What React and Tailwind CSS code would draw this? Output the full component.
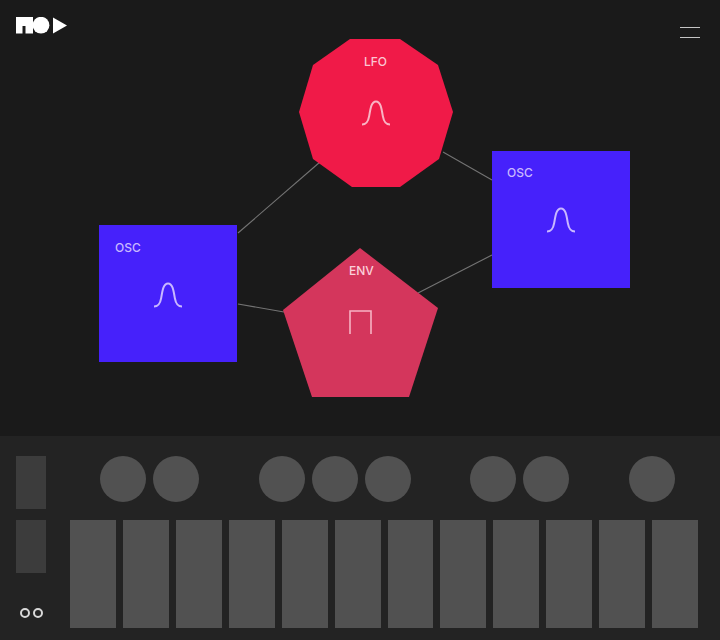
const FONT = "font-['Inter','Liberation_Sans',sans-serif]";

const Bell = ({ className, color }) => (
  <svg className={className} width="30" height="26" viewBox="0 0 30 26" fill="none">
    <path
      d="M1 24.5C5 24.5 7 22.5 8.2 16C9.5 8 10.5 1.5 15 1.5C19.5 1.5 20.5 8 21.8 16C23 22.5 25 24.5 29 24.5"
      stroke={color}
      strokeWidth="2"
    />
  </svg>
);

const Pulse = ({ className, color }) => (
  <svg className={className} width="24" height="24" viewBox="0 0 24 24" fill="none">
    <path d="M1 24V1H22V24" stroke={color} strokeWidth="1.6" />
  </svg>
);

const Knob = ({ className = "" }) => (
  <div className={`w-[46px] h-[46px] rounded-full bg-[#515151] shrink-0 ${className}`} />
);

const KEYS = Array.from({ length: 12 }, (_, i) => i);

export default function App() {
  return (
    <div className={`w-[720px] h-[640px] flex flex-col bg-[#1a1a1a] overflow-hidden ${FONT}`}>
      {/* patch canvas */}
      <div className="relative h-[436px] shrink-0">
        <svg className="absolute left-[16px] top-[17px]" width="52" height="18" viewBox="0 0 52 18" fill="white">
          <path d="M0 0H17V16.5H9.5V9H6.5V16.5H0Z" />
          <circle cx="25" cy="8.2" r="8.4" />
          <path d="M37 0.5L51 8.5L37 16.5Z" />
        </svg>

        <div className="absolute left-[680px] top-[27px] w-[20px] flex flex-col gap-[9px]">
          <div className="h-px bg-[#c4c4c4]" />
          <div className="h-px bg-[#c4c4c4]" />
        </div>

        <svg className="absolute inset-0" width="720" height="436" fill="none" stroke="#747474" strokeWidth="1.1">
          <path d="M238 233L320 162" />
          <path d="M443 152L492 180" />
          <path d="M238 304L284 312" />
          <path d="M418 293L492 255" />
        </svg>

        {/* LFO */}
        <div className="absolute left-[299px] top-[39px] w-[154px] h-[148px] bg-[#f01a48] [clip-path:polygon(51px_0,101px_0,139px_26px,154px_73px,140px_120px,101px_148px,53px_148px,14px_120px,0_73px,14px_26px)]">
          <span className="absolute left-[65px] top-[15px] text-[12px] leading-4 font-medium text-[#fbc6d2]">LFO</span>
          <Bell className="absolute left-[62px] top-[61px]" color="#f9b4c4" />
        </div>

        {/* OSC left */}
        <div className="absolute left-[99px] top-[225px] w-[138px] h-[137px] bg-[#4621fb]">
          <span className="absolute left-[16px] top-[15px] text-[12px] leading-4 font-medium text-[#c9b8ff]">OSC</span>
          <Bell className="absolute left-[54px] top-[57px]" color="#c9b8ff" />
        </div>

        {/* OSC right */}
        <div className="absolute left-[492px] top-[151px] w-[138px] h-[137px] bg-[#4621fb]">
          <span className="absolute left-[15px] top-[14px] text-[12px] leading-4 font-medium text-[#c9b8ff]">OSC</span>
          <Bell className="absolute left-[54px] top-[56px]" color="#c9b8ff" />
        </div>

        {/* ENV */}
        <div className="absolute left-[283px] top-[248px] w-[155px] h-[149px] bg-[#d4365c] [clip-path:polygon(77px_0,155px_60px,126px_149px,29px_149px,0_62px)]">
          <span className="absolute left-[66px] top-[15px] text-[12px] leading-4 font-medium text-[#fbd0da]">ENV</span>
          <Pulse className="absolute left-[66px] top-[62px]" color="#f7b3c3" />
        </div>
      </div>

      {/* sequencer panel */}
      <div className="flex-1 flex bg-[#232323] pl-[16px] pt-[20px]">
        <div className="w-[30px] flex flex-col shrink-0">
          <div className="h-[53px] bg-[#3c3c3c]" />
          <div className="h-[53px] mt-[11px] bg-[#3c3c3c]" />
          <div className="flex gap-[3px] mt-[35px] ml-[4px]">
            <div className="w-[10px] h-[10px] rounded-full border-2 border-[#d8d8d8]" />
            <div className="w-[10px] h-[10px] rounded-full border-2 border-[#d8d8d8]" />
          </div>
        </div>
        <div className="ml-[24px] w-[628px] flex flex-col">
          <div className="flex gap-[7px] pl-[30px] h-[46px]">
            <Knob />
            <Knob />
            <Knob className="ml-[53px]" />
            <Knob />
            <Knob />
            <Knob className="ml-[52px]" />
            <Knob />
            <Knob className="ml-[53px]" />
          </div>
          <div className="flex gap-[7px] mt-[18px]">
            {KEYS.map((k) => (
              <div key={k} className="flex-1 h-[108px] bg-[#515151]" />
            ))}
          </div>
        </div>
      </div>
    </div>
  );
}
